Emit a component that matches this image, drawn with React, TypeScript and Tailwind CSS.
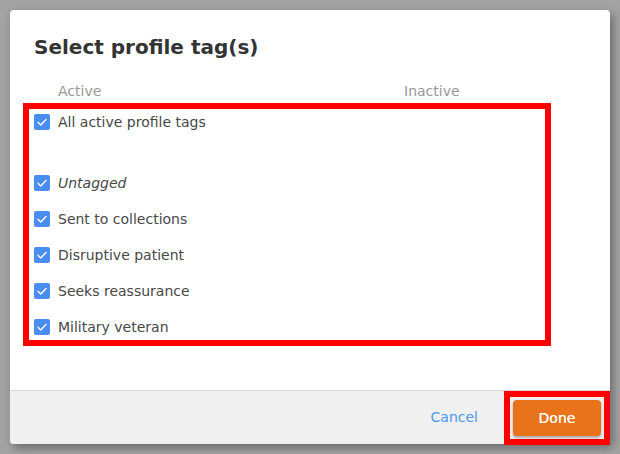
import React, { useState, JSX } from "react";

type Tag = {
  id: string;
  label: string;
  italic?: boolean;
};

const tags: Tag[] = [
  { id: "untagged", label: "Untagged", italic: true },
  { id: "collections", label: "Sent to collections" },
  { id: "disruptive", label: "Disruptive patient" },
  { id: "reassurance", label: "Seeks reassurance" },
  { id: "veteran", label: "Military veteran" },
];

function Checkbox({ checked, onChange }: { checked: boolean; onChange: () => void }) {
  return (
    <button
      type="button"
      onClick={onChange}
      className={
        checked
          ? "w-4 h-4 shrink-0 rounded-[2px] bg-[#4a8df0] flex items-center justify-center"
          : "w-4 h-4 shrink-0 rounded-[2px] border border-[#b5b5b5] bg-white"
      }
    >
      {checked && (
        <svg width="16" height="16" viewBox="0 0 16 16" fill="none">
          <polyline
            points="4 8.3 6.8 11 12 5.5"
            stroke="white"
            strokeWidth="1.4"
            strokeLinecap="round"
            strokeLinejoin="round"
          />
        </svg>
      )}
    </button>
  );
}

export default function App(): JSX.Element {
  const [allActive, setAllActive] = useState(true);
  const [checked, setChecked] = useState<Record<string, boolean>>(() =>
    tags.reduce((acc, t) => ({ ...acc, [t.id]: true }), {})
  );

  function toggle(id: string) {
    setChecked((prev) => ({ ...prev, [id]: !prev[id] }));
  }

  return (
    <div className="w-[620px] h-[454px] bg-[#a3a3a3] pt-[10px] pl-[10px] font-['DejaVu_Sans',sans-serif]">
      <div className="w-[600px] bg-white rounded-[4px] shadow-[3px_4px_10px_rgba(0,0,0,0.35)] overflow-visible">
        <div className="px-6 pt-[25px]">
          <h2 className="text-[20px] leading-6 font-bold text-[#333]">Select profile tag(s)</h2>

          {/* column headings */}
          <div className="mt-[22px] flex text-[14px] leading-5 text-[#999]">
            <span className="ml-6 w-[346px]">Active</span>
            <span>Inactive</span>
          </div>

          <div className="mt-[2px] -ml-[11px] w-[528px] border-[6px] border-[#ff0000] px-[5px] py-[5px] flex flex-col gap-5 text-[14px] leading-4 text-[#484848]">
            <label className="flex items-center gap-2 cursor-pointer">
              <Checkbox checked={allActive} onChange={() => setAllActive(!allActive)} />
              <span>All active profile tags</span>
            </label>
            {tags.map((tag, i) => (
              <label
                key={tag.id}
                className={i === 0 ? "mt-[25px] flex items-center gap-2 cursor-pointer" : "flex items-center gap-2 cursor-pointer"}
              >
                <Checkbox checked={checked[tag.id]} onChange={() => toggle(tag.id)} />
                <span className={tag.italic ? "italic" : ""}>{tag.label}</span>
              </label>
            ))}
          </div>
        </div>

        <div className="mt-[44px] border-t border-[#d6d6d6] bg-[#f0f0f0] rounded-b-[4px] flex items-center justify-end">
          <button type="button" className="mr-[26px] text-[14px] text-[#4d97f0]">
            Cancel
          </button>
          <div className="border-[6px] border-[#ff0000] p-[3px] -mb-px">
            <button
              type="button"
              className="w-[88px] h-9 rounded-[4px] bg-[#e8731a] text-white text-[14px] [text-shadow:0_0_0.6px_white] shadow-[0_2px_3px_rgba(0,0,0,0.3)]"
            >
              Done
            </button>
          </div>
        </div>
      </div>
    </div>
  );
}
